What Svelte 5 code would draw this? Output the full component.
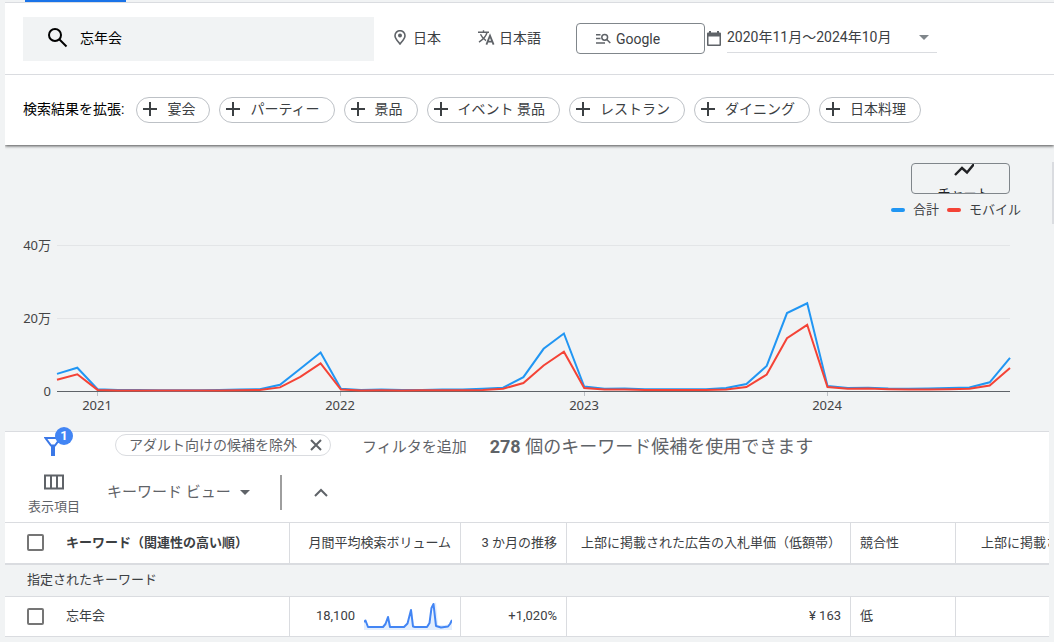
<script>
  let keyword = $state('忘年会');
  let width = $state(1049);

  const ideas = ['宴会', 'パーティー', '景品', 'イベント 景品', 'レストラン', 'ダイニング', '日本料理'];

  // Monthly search volume in units of 10,000, November 2020 to October 2024
  const total = [
    4.7, 6.4, 0.5, 0.25, 0.3, 0.2, 0.2, 0.2, 0.3, 0.4, 0.5, 1.7, 6.1, 10.6,
    0.6, 0.3, 0.4, 0.3, 0.3, 0.4, 0.4, 0.6, 0.9, 3.8, 11.6, 15.8,
    1.2, 0.6, 0.7, 0.5, 0.5, 0.5, 0.5, 0.8, 1.9, 6.9, 21.4, 24.1,
    1.4, 0.8, 0.9, 0.7, 0.6, 0.7, 0.8, 1, 2.4, 9.1
  ];
  const mobile = [
    3.1, 4.6, 0.3, 0.15, 0.15, 0.1, 0.1, 0.1, 0.15, 0.2, 0.3, 1, 3.9, 7.6,
    0.4, 0.15, 0.2, 0.15, 0.2, 0.2, 0.2, 0.3, 0.6, 2.2, 7, 10.8,
    0.8, 0.4, 0.45, 0.3, 0.3, 0.3, 0.3, 0.4, 1.1, 4.5, 14.5, 18.2,
    1.1, 0.6, 0.7, 0.5, 0.4, 0.4, 0.5, 0.6, 1.5, 6.3
  ];
  const years = [[2, '2021'], [14, '2022'], [26, '2023'], [38, '2024']];

  const left = 52;
  const base = 172;
  let right = $derived(width - 44);
  const x = (i, r) => left + ((r - left) * i) / (total.length - 1);
  const y = (v) => base - v * 3.64;
  const line = (data, r) => data.map((v, i) => `${x(i, r).toFixed(1)},${y(v).toFixed(1)}`).join(' ');
</script>

<div class="page">
  <div class="tabs"><span class="active-tab"></span></div>

  <header class="panel">
    <div class="controls">
      <label class="search">
        <svg width="20" height="20" viewBox="0 0 20 20" fill="none" stroke="#000" stroke-width="2">
          <circle cx="7" cy="7" r="6" /><path d="M11.500 11.500l7 7" />
        </svg>
        <input type="text" bind:value={keyword} aria-label="キーワード" />
      </label>

      <button class="plain place">
        <svg width="12" height="15" viewBox="0 0 12 15" fill="none" stroke="#5f6368">
          <path stroke-width="1.6" d="M6 14C3.600 11 1 8.600 1 5.700a5 5 0 0 1 10 0C11 8.600 8.400 11 6 14z" />
          <circle cx="6" cy="5.500" r="2" fill="#5f6368" stroke="none" />
        </svg>
        日本
      </button>
      <button class="plain language">
        <svg width="17" height="15" viewBox="0 0 17 15" fill="none" stroke="#5f6368" stroke-width="1.400">
          <path d="M0 2.200h11M5.500 .3v2M9 2.500C8 6.500 5 9.500 1 12.200M2.500 4.300c1.300 3 3.300 5 5.500 6.300" />
          <path stroke-width="1.800" d="M8.400 14.600l3.600-9 3.600 9M9.500 11.600h5" />
        </svg>
        日本語
      </button>
      <button class="network">
        <svg width="15" height="12" viewBox="0 0 15 12" fill="none" stroke="#5f6368" stroke-width="1.500">
          <path d="M0 1.800h4.500M0 5.500h4.500M0 10h9" />
          <circle cx="8.700" cy="4.300" r="2.900" /><path d="M10.800 6.500l3.500 3.500" />
        </svg>
        Google
      </button>
      <svg class="calendar" width="14" height="15" viewBox="0 0 14 15" fill="#5f6368">
        <path d="M2 0h2v1.500h6V0h2v1.500h1a1 1 0 0 1 1 1V14a1 1 0 0 1-1 1H1a1 1 0 0 1-1-1V2.500a1 1 0 0 1 1-1h1zM1.500 5.500v8h11v-8z" />
      </svg>
      <button class="plain dates">
        <span>2020年11月～2024年10月</span>
        <svg width="10" height="5" viewBox="0 0 10 5" fill="#80868b"><path d="M0 0h10L5 5z" /></svg>
      </button>
    </div>

    <div class="broaden">
      <span>検索結果を拡張:</span>
      {#each ideas as idea}
        <button class="idea">
          <svg width="14" height="14" viewBox="0 0 14 14" fill="none" stroke="#3c4043" stroke-width="2"><path d="M7 0v14M0 7h14" /></svg>
          {idea}
        </button>
      {/each}
    </div>
  </header>

  <section class="chart" bind:clientWidth={width}>
    <span class="scroll-thumb"></span>
    <button class="chart-type">
      <svg width="20" height="12" viewBox="0 0 20 12" fill="none" stroke="#202124" stroke-width="2.400"><path d="M1 11l7-7 5 4.500L20 0" /></svg>
      <span>チャート</span>
    </button>
    <div class="legend">
      <span class="swatch total"></span><span>合計</span>
      <span class="swatch mobile"></span><span>モバイル</span>
    </div>
    <svg class="plot" {width} height="212">
      <g stroke="#e3e5e7">
        <path d="M{left} 26.500H{right}" /><path d="M{left} 99.500H{right}" />
      </g>
      <g class="axis" text-anchor="end">
        <text x="46" y="31">40万</text>
        <text x="46" y="104">20万</text>
        <text x="46" y="177">0</text>
      </g>
      <path d="M{left} 172.500H{right}" stroke="#5f6368" stroke-width="1" />
      {#each years as [i, label]}
        <path d="M{Math.floor(x(i, right))}.500 173v4" stroke="#bdc1c6" />
        <text class="axis" text-anchor="middle" x={Math.floor(x(i, right))} y="191">{label}</text>
      {/each}
      <polyline points={line(total, right)} fill="none" stroke="#2196f3" stroke-width="2" />
      <polyline points={line(mobile, right)} fill="none" stroke="#f44336" stroke-width="2" />
    </svg>
  </section>

  <main class="results">
    <div class="filters">
      <button class="plain funnel" aria-label="フィルタ">
        <svg width="18" height="19" viewBox="0 0 18 19" fill="none" stroke="#3b78e7" stroke-width="2">
          <path d="M1.500 1h15L11 8.500H7z" /><path stroke-width="4" d="M9 8.500V19" />
        </svg>
        <span class="badge">1</span>
      </button>
      <button class="filter">
        アダルト向けの候補を除外
        <svg width="12" height="12" viewBox="0 0 12 12" fill="none" stroke="#5f6368" stroke-width="2"><path d="M1 1l10 10M11 1L1 11" /></svg>
      </button>
      <button class="plain add">フィルタを追加</button>
      <p><b>278</b> 個のキーワード候補を使用できます</p>
    </div>

    <div class="tools">
      <button class="plain columns">
        <svg width="20" height="16" viewBox="0 0 20 16" fill="none" stroke="#5f6368" stroke-width="2"><path d="M1 1.500h18v13H1zM7 1v14M13 1v14" /></svg>
        <span>表示項目</span>
      </button>
      <button class="plain view">
        キーワード ビュー
        <svg width="10" height="5" viewBox="0 0 10 5" fill="#5f6368"><path d="M0 0h10L5 5z" /></svg>
      </button>
      <span class="divider"></span>
      <button class="plain" aria-label="折りたたむ">
        <svg width="14" height="9" viewBox="0 0 14 9" fill="none" stroke="#5f6368" stroke-width="2"><path d="M1 8l6-6 6 6" /></svg>
      </button>
    </div>

    <table>
      <colgroup>
        <col class="c-keyword" /><col class="c-volume" /><col class="c-trend" /><col class="c-bid" /><col class="c-rivalry" /><col />
      </colgroup>
      <thead>
        <tr>
          <th class="name"><div class="cell"><input type="checkbox" aria-label="すべて選択" /><b>キーワード（関連性の高い順）</b></div></th>
          <th class="num">月間平均検索ボリューム</th>
          <th class="num">3 か月の推移</th>
          <th class="num">上部に掲載された広告の入札単価（低額帯）</th>
          <th>競合性</th>
          <th class="last">上部に掲載された広告の入札単価（高額帯）</th>
        </tr>
      </thead>
      <tbody>
        <tr class="group"><td colspan="6">指定されたキーワード</td></tr>
        <tr>
          <td class="name"><div class="cell"><input type="checkbox" id="row-1" /><label for="row-1">忘年会</label></div></td>
          <td class="num volume-cell">
            <div class="volume">
              <span>18,100</span>
              <svg width="88" height="28" viewBox="0 0 88 28" fill="none">
                <path fill="#e3eefd" d="M0 20l2-2 2 6h15l5-9 2 9h15l4-5 3-11 2 16h13l4-5 3-16 2-3 2 23h8l5-2 1-4v11H0z" />
                <path stroke="#4285f4" stroke-width="2" stroke-linejoin="round" d="M0 20l1.500-1.500L4 25h15l2.500-3L24 15l2 10h14l3.500-3.500L47 8l2 16.500 2 .5h12l2.500-4L67.500 6l2-4L72 24l5 1.500 7-1 2-2.500 2-4" />
              </svg>
            </div>
          </td>
          <td class="num">+1,020%</td>
          <td class="num">¥ 163</td>
          <td>低</td>
          <td></td>
        </tr>
      </tbody>
    </table>
  </main>
</div>

<style>
  :global(body) {
    margin: 0;
    background: #f1f3f4;
  }
  .page {
    margin-left: 5px;
    overflow: hidden;
    font: 14px/20px Roboto, "Noto Sans CJK JP", sans-serif;
    color: #3c4043;
  }
  .page * { box-sizing: border-box; }
  svg { display: block; flex: none; }
  button, input { font: inherit; color: inherit; }
  button {
    display: flex;
    align-items: center;
    padding: 0;
    background: none;
    border: 1px solid #bdc1c6;
    white-space: nowrap;
  }
  .plain { border: 0; }

  .tabs {
    height: 3px;
    padding-left: 20px;
    border-bottom: 1px solid #dadce0;
  }
  .active-tab {
    display: block;
    width: 101px;
    height: 2px;
    background: #1a73e8;
  }

  .panel {
    position: relative;
    background: #fff;
    box-shadow: 0 1px 3px rgba(0, 0, 0, 0.7);
    clip-path: inset(0 0 -6px 0);
  }
  .controls {
    display: flex;
    align-items: center;
    height: 72px;
    padding-left: 18px;
    border-bottom: 1px solid #dadce0;
  }
  .controls .plain { padding-bottom: 2px; }
  .search {
    display: flex;
    align-items: center;
    gap: 12px;
    flex: 0 1 351px;
    height: 44px;
    padding: 0 0 2px 25px;
    background: #f1f3f4;
    color: #000;
  }
  .search input {
    flex: 1;
    min-width: 0;
    padding: 0;
    border: 0;
    outline: 0;
    background: none;
  }
  .place { gap: 7px; margin-left: 20px; }
  .language { gap: 4px; margin-left: 37px; }
  .network {
    gap: 5px;
    width: 129px;
    height: 31px;
    margin-left: 35px;
    padding-left: 19px;
    border-color: #80868b;
    border-radius: 4px;
  }
  .calendar { margin-left: 2px; }
  .dates {
    justify-content: space-between;
    width: 210px;
    height: 28px;
    margin-left: 6px;
    padding-right: 8px;
    border-bottom: 1px solid #dadce0;
  }

  .broaden {
    display: flex;
    align-items: center;
    gap: 9px;
    height: 70px;
    padding-left: 18px;
    color: #000;
    white-space: nowrap;
  }
  .broaden span { margin-right: 3px; padding-bottom: 2px; }
  .idea {
    gap: 10px;
    height: 26px;
    padding: 0 14px 2px 6px;
    border-radius: 13px;
    color: #3c4043;
  }

  .chart {
    position: relative;
    padding-top: 18px;
  }
  .scroll-thumb {
    position: absolute;
    top: 17px;
    right: 0;
    width: 2px;
    height: 62px;
    background: #dadce0;
  }
  .chart-type {
    flex-direction: column;
    gap: 8px;
    width: 99px;
    height: 31px;
    margin: 0 44px 0 auto;
    padding-left: 6px;
    border-color: #80868b;
    border-radius: 4px;
    overflow: hidden;
    font-size: 13px;
    color: #202124;
  }
  .legend {
    display: flex;
    justify-content: flex-end;
    align-items: center;
    gap: 8px;
    height: 18px;
    margin: 7px 33px 0 0;
    font-size: 13px;
  }
  .swatch {
    width: 14px;
    height: 4px;
    border-radius: 2px;
  }
  .swatch.total { background: #2196f3; }
  .swatch.mobile { background: #f44336; }
  .plot { max-width: 100%; }
  .axis {
    font: 13px "Noto Sans", "Noto Sans CJK JP", sans-serif;
    fill: #444;
  }

  .results {
    margin-right: 5px;
    border-top: 1px solid #dadce0;
    background: #fff;
    color: #5f6368;
  }
  .filters {
    display: flex;
    align-items: center;
    height: 26px;
    padding-left: 39px;
  }
  .funnel {
    position: relative;
    width: 18px;
    height: 19px;
    margin-top: 3px;
  }
  .badge {
    position: absolute;
    top: -10px;
    left: 11px;
    width: 18px;
    height: 18px;
    border-radius: 9px;
    background: #4285f4;
    color: #fff;
    font-size: 13px;
    font-weight: 700;
    line-height: 18px;
    text-align: center;
  }
  .filter {
    gap: 13px;
    height: 22px;
    margin-left: 53px;
    padding: 0 8px 0 13px;
    border-color: #dadce0;
    border-radius: 11px;
  }
  .add { margin: 3px 0 0 31px; font-size: 15px; }
  .filters p {
    margin: 3px 0 0 23px;
    font-size: 18px;
    white-space: nowrap;
  }

  .tools {
    display: flex;
    align-items: center;
    height: 64px;
    padding: 4px 0 0 22px;
  }
  .columns {
    flex-direction: column;
    gap: 7px;
    padding: 6px 0 0 1px;
    font-size: 13px;
  }
  .view { gap: 9px; margin-left: 27px; font-size: 15px; }
  .divider {
    width: 2px;
    height: 35px;
    margin: 0 32px 0 30px;
    background: #9e9e9e;
  }

  table {
    width: 100%;
    table-layout: fixed;
    border-collapse: separate;
    border-spacing: 0;
    font-size: 13px;
    color: #3c4043;
  }
  .c-keyword { width: 285px; }
  .c-volume { width: 171px; }
  .c-trend { width: 106px; }
  .c-bid { width: 284px; }
  .c-rivalry { width: 105px; }
  th, td {
    height: 40px;
    padding: 0 9px 1px;
    border-right: 1px solid #dadce0;
    border-bottom: 1px solid #dadce0;
    text-align: left;
    font-weight: 400;
    white-space: nowrap;
    overflow: hidden;
  }
  th {
    height: 43px;
    border-top: 1px solid #dadce0;
    border-bottom-width: 2px;
  }
  th:last-child, td:last-child { border-right: 0; }
  .num { text-align: right; }
  .name { padding-left: 22px; }
  .last { padding: 0 0 1px 25px; }
  .volume-cell { padding-right: 8px; }
  .group td {
    height: 32px;
    padding: 0 22px 2px;
    background: #f1f3f4;
  }
  .cell {
    display: flex;
    align-items: center;
    gap: 22px;
  }
  input[type="checkbox"] {
    appearance: none;
    width: 17px;
    height: 17px;
    margin: 0;
    border: 2px solid #757575;
    border-radius: 2px;
    background: #fff;
  }
  .volume {
    display: flex;
    justify-content: flex-end;
    align-items: center;
    gap: 9px;
  }
</style>
